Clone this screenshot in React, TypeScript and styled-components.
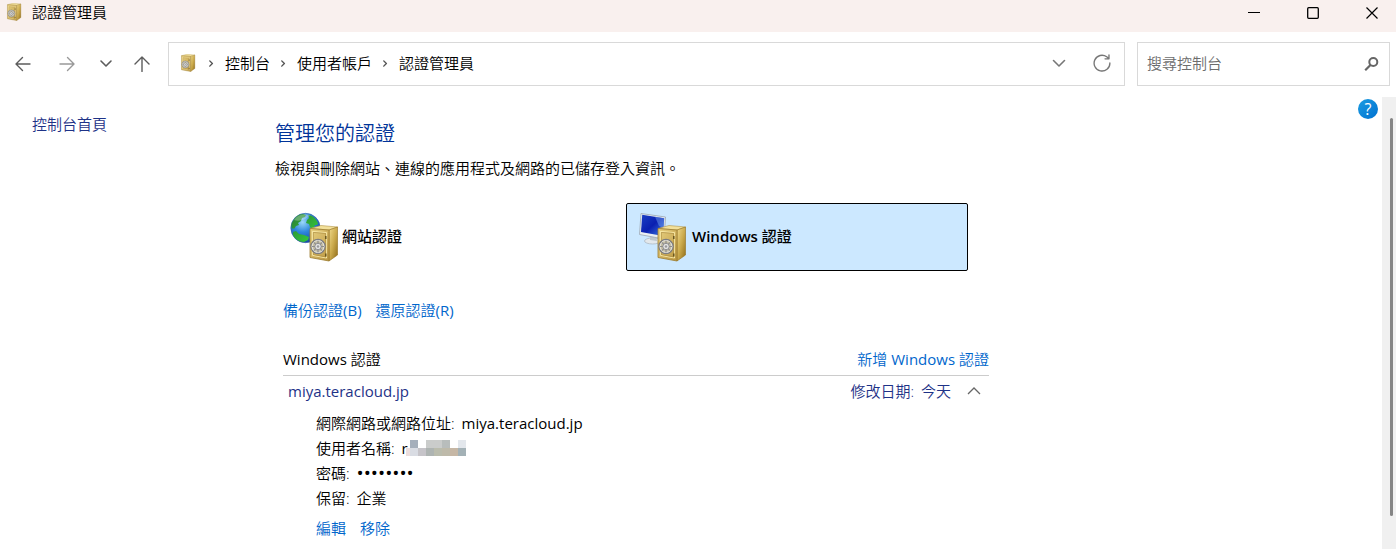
import React, { useId } from "react";
import styled, { createGlobalStyle } from "styled-components";

const GlobalStyle = createGlobalStyle`
  * { box-sizing: border-box; }
  body {
    margin: 0;
    background: #fff;
    color: #000;
    font-family: "Open Sans", "Noto Sans CJK TC", sans-serif;
    font-size: 15px;
    font-weight: 350;
    line-height: 20px;
  }
  h1, h2, p, dl, dd, ol { margin: 0; padding: 0; font-weight: inherit; }
  button, input { font: inherit; color: inherit; }
  svg { display: block; flex: none; }
`;

const Window = styled.div`
  min-height: 100vh;
  display: flex;
  flex-direction: column;
`;

/* Latin runs are set a little heavier than the Chinese text around them. */
const Latin = styled.span<{ $weight?: number }>`
  font-weight: ${(p) => p.$weight ?? 400};
`;

const TitleBar = styled.header`
  height: 32px;
  padding-left: 6px;
  display: flex;
  align-items: flex-start;
  background: #f9f0ee;
`;

const WindowTitle = styled.div`
  flex: 1;
  display: flex;
  align-items: center;
  gap: 8px;
  padding-top: 2px;
`;

const CaptionButton = styled.button`
  width: 59px;
  height: 26px;
  padding: 0;
  border: 0;
  background: none;
  display: grid;
  place-items: center;
`;

const CaptionButtons = styled.div`
  display: flex;
  margin-right: -5px;
`;

const Toolbar = styled.div`
  display: flex;
  align-items: center;
  gap: 12px;
  padding: 10px 6px 11px 8px;
`;

const NavButtons = styled.div`
  display: flex;
  align-items: center;
  gap: 14px;
  width: 148px;
`;

const IconButton = styled.button<{ $tone?: string; $width?: number }>`
  width: ${(p) => p.$width ?? 30}px;
  height: 30px;
  padding: 0;
  border: 0;
  background: none;
  color: ${(p) => p.$tone ?? "#5c5c5c"};
  display: grid;
  place-items: center;
`;

const AddressBar = styled.nav`
  flex: 1;
  height: 44px;
  border: 1px solid #d9d9d9;
  padding: 0 7px 2px 11px;
  display: flex;
  align-items: center;
`;

const Crumbs = styled.ol`
  flex: 1;
  display: flex;
  list-style: none;
`;

const Crumb = styled.li`
  display: flex;
  align-items: center;
  gap: 10px;
  padding-left: 10px;
  color: #555;

  a {
    color: #000;
    text-decoration: none;
  }
`;

const SearchBox = styled.label`
  width: 253px;
  height: 44px;
  border: 1px solid #d9d9d9;
  padding: 0 10px 2px 9px;
  display: flex;
  align-items: center;
  color: #666;

  input {
    flex: 1;
    min-width: 0;
    border: 0;
    padding: 0;
    outline: 0;
    background: none;
  }
  input::placeholder { color: #6d6d6d; opacity: 1; }
`;

const Body = styled.div`
  flex: 1;
  display: flex;
`;

const Sidebar = styled.aside`
  width: 275px;
  padding: 17px 0 0 32px;
`;

const Main = styled.main`
  flex: 1;
  padding: 23px 0 8px;
`;

const Content = styled.div`
  max-width: 714px;
`;

const Link = styled.a<{ $tone?: string }>`
  color: ${(p) => p.$tone ?? "#0066cc"};
  text-decoration: none;
`;

const Heading = styled.h1`
  font-size: 20px;
  line-height: 28px;
  color: #003399;
`;

const Description = styled.p`
  margin-top: 10px;
`;

const Vaults = styled.div`
  display: grid;
  grid-template-columns: 1fr 1fr;
  gap: 8px;
  margin: 25px 21px 0 1px;
`;

const VaultButton = styled.button<{ $selected?: boolean }>`
  height: 68px;
  padding: 0 12px 2px;
  border: 1px solid ${(p) => (p.$selected ? "#000" : "transparent")};
  border-radius: 2px;
  background: ${(p) => (p.$selected ? "#cce8ff" : "transparent")};
  display: flex;
  align-items: center;
  gap: 3px;
  font-weight: 500;
`;

const LinkRow = styled.div<{ $top: number }>`
  display: flex;
  gap: 14px;
  margin-top: ${(p) => p.$top}px;
`;

const Section = styled.section`
  padding-left: 8px;
`;

const SectionHeader = styled.div`
  display: flex;
  justify-content: space-between;
  margin-top: 29px;
  padding-bottom: 6px;
  border-bottom: 1px solid #ccc;
`;

const SectionTitle = styled.h2`
  font-size: 15px;
`;

const EntryButton = styled.button`
  width: 100%;
  margin-top: 5px;
  padding: 0 8px 0 5px;
  border: 0;
  background: none;
  color: #1e3287;
  display: flex;
  align-items: center;
  justify-content: space-between;
  text-align: left;
`;

const EntryDate = styled.span`
  display: flex;
  align-items: center;
  gap: 7px;

  svg { margin-left: 9px; }
`;

const Details = styled.div`
  padding: 9px 0 0 33px;
`;

const Detail = styled.div`
  display: flex;
  align-items: center;
  gap: 7px;
  height: 25px;

  dd { display: flex; align-items: center; }
`;

const Bullets = styled(Latin)`
  font-size: 19px;
`;

const HelpColumn = styled.div`
  padding: 2px 4px 0 0;
`;

const HelpButton = styled.button`
  width: 20px;
  height: 20px;
  padding: 0;
  border: 0;
  border-radius: 50%;
  background: linear-gradient(135deg, #1b9de2, #0070d0);
  color: #fff;
  font-size: 16px;
  font-weight: 500;
  display: grid;
  place-items: center;
`;

const ScrollTrack = styled.div`
  width: 14px;
  padding: 21px 3px 33px 8px;
  background: #f0f0f0;
  display: flex;
`;

const ScrollThumb = styled.div`
  flex: 1;
  border-radius: 2px;
  background: #858585;
`;

function SafeShape({ id }: { id: string }) {
  return (
    <>
      <defs>
        <linearGradient id={`${id}f`} x1="0" y1="0" x2="1" y2="1">
          <stop offset="0" stopColor="#e6cf80" />
          <stop offset=".5" stopColor="#d3b562" />
          <stop offset="1" stopColor="#b8943e" />
        </linearGradient>
        <linearGradient id={`${id}s`} x1="0" y1="0" x2="1" y2="1">
          <stop offset="0" stopColor="#f0da8c" />
          <stop offset=".5" stopColor="#cbaa4c" />
          <stop offset="1" stopColor="#8d6a17" />
        </linearGradient>
      </defs>
      <path d="M1 3.500 L12 .5 L28.500 2 L20 5 Z" fill="#f2e09a" stroke="#b39548" strokeWidth=".6" />
      <path d="M20 5 L28.500 2 L28.500 30 L20 36 Z" fill={`url(#${id}s)`} stroke="#94711f" strokeWidth=".6" />
      <path d="M1 3.500 L20 5 L20 36 L1 32.500 Z" fill={`url(#${id}f)`} stroke="#9c7c30" strokeWidth=".8" />
      <path d="M3.500 6.500 L17.500 7.600 L17.500 33 L3.500 30.300 Z" fill="none" stroke="#fff0b0" strokeWidth=".9" />
      <path d="M4.300 7.400 L16.700 8.400 L16.700 32 L4.300 29.600 Z" fill="none" stroke="#a5843a" strokeWidth=".6" />
      <path d="M16.800 11v3M16.800 28.500v3" stroke="#63501c" strokeWidth="1.400" />
      <circle cx="9" cy="21.500" r="7" fill="#c4bda4" stroke="#7d7d80" strokeWidth="1.500" />
      <circle cx="9" cy="21.500" r="6" fill="none" stroke="#f2f2ee" strokeWidth=".9" />
      <path d="M9 15.500v12M3 21.500h12M4.800 17.300l8.400 8.400M13.200 17.300l-8.400 8.400" stroke="#8c8c8c" strokeWidth="1.100" />
      <circle cx="9" cy="21.500" r="3.200" fill="#e2e2e2" stroke="#808084" strokeWidth=".8" />
      <circle cx="9" cy="21.500" r="1.200" fill="#9a9a9c" />
    </>
  );
}

function SafeIcon() {
  const id = useId();
  return (
    <svg width="18" height="18" viewBox="-2 0 37 37" aria-hidden="true">
      <SafeShape id={id} />
    </svg>
  );
}

function WebVaultIcon() {
  const id = useId();
  return (
    <svg width="50" height="52" viewBox="-1 -1 50 52" aria-hidden="true">
      <defs>
        <radialGradient id={`${id}g`} cx=".4" cy=".3" r=".75">
          <stop offset="0" stopColor="#9bd8f8" />
          <stop offset=".45" stopColor="#2f88dc" />
          <stop offset="1" stopColor="#1240a0" />
        </radialGradient>
        <linearGradient id={`${id}l`} x1="0" y1="0" x2="1" y2="1">
          <stop offset="0" stopColor="#2a7b36" />
          <stop offset="1" stopColor="#35d93c" />
        </linearGradient>
      </defs>
      <g transform="translate(0 1)">
        <circle cx="15.500" cy="16" r="14.700" fill={`url(#${id}g)`} stroke="#3565a2" strokeWidth=".6" />
        <path
          d="M3 9C6 4 9 2.500 13 2l3 1-1 2-3 1-1 3-3 2 1 2-3 1-2 3-1-1-1 1C1 14 1 12 3 9Z M18 3c5 0 8 4 10 8l-1 2-2 0-2 5-3-3-1-3-3-1 1-3 2-2Z M3 20l3-1 3 3 5 1 5 2-1 3-4 2C9 30 5 27 3 23Z"
          fill={`url(#${id}l)`}
        />
        <path d="M4 8C7 3 13 1 20 3C17 7 10 10 4 8Z" fill="#fff" opacity=".28" />
      </g>
      <g transform="translate(19 14)">
        <SafeShape id={id} />
      </g>
    </svg>
  );
}

function WindowsVaultIcon() {
  const id = useId();
  return (
    <svg width="50" height="52" viewBox="0 -1 50 52" aria-hidden="true">
      <defs>
        <linearGradient id={`${id}m`} x1="0" y1="0" x2="1" y2="1">
          <stop offset="0" stopColor="#1b3fc4" />
          <stop offset=".5" stopColor="#0a1fb0" />
          <stop offset="1" stopColor="#3f7ee6" />
        </linearGradient>
      </defs>
      <g transform="translate(0 2)">
        <ellipse cx="13.500" cy="28" rx="8" ry="3" fill="#e3e8ec" stroke="#a9b3bb" strokeWidth=".7" />
        <path d="M11 21l6 1 1 6-7-1Z" fill="#bcc5cc" />
        <path d="M2 .5L26.500 4L25 26L.5 21.500Z" fill="#e9eef2" stroke="#9aa6b2" strokeWidth=".8" />
        <path d="M3.200 1.800L25.200 5.200L24 23L2 19Z" fill={`url(#${id}m)`} />
        <path d="M16 3.800L25.200 5.200L24.500 15L20 13Z" fill="#77a8f5" opacity=".45" />
      </g>
      <g transform="translate(18 14)">
        <SafeShape id={id} />
      </g>
    </svg>
  );
}

type GlyphProps = { d: string; size?: number; weight?: number };

function Glyph({ d, size = 16, weight = 1.4 }: GlyphProps) {
  return (
    <svg
      width={size}
      height={size}
      viewBox="0 0 16 16"
      fill="none"
      stroke="currentColor"
      strokeWidth={weight}
      strokeLinecap="round"
      strokeLinejoin="round"
      aria-hidden="true"
    >
      <path d={d} />
    </svg>
  );
}

const crumbs = ["控制台", "使用者帳戶", "認證管理員"];

/* Two rows of 8px blocks covering the account name. */
const maskRows = [
  ["", "#a5afbb", "", "#cacccb", "#cacccb", "#b8bdbc", "", "#e3e7ec"],
  ["#ecdedd", "#d9dce3", "#c6c4c9", "#aeb4b2", "#babcad", "#bebaaa", "#c6b7a5", "#a3b1b6"],
];

const Mask = styled.svg`
  margin-left: -2px;
`;

function MaskedName() {
  return (
    <Mask width="60" height="16" aria-label="已遮蔽">
      {maskRows.map((row, y) =>
        row.map((fill, x) =>
          fill ? (
            <rect key={`${x}-${y}`} x={x * 8 - 4} y={y * 8} width="8" height="8" fill={fill} shapeRendering="crispEdges" />
          ) : null
        )
      )}
    </Mask>
  );
}

export default function App() {
  return (
    <Window>
      <GlobalStyle />
      <TitleBar>
        <WindowTitle>
          <SafeIcon />
          認證管理員
        </WindowTitle>
        <CaptionButtons>
          <CaptionButton aria-label="最小化">
            <svg width="12" height="12" stroke="#000" aria-hidden="true"><path d="M0 5.500h12" /></svg>
          </CaptionButton>
          <CaptionButton aria-label="最大化">
            <svg width="12" height="12" fill="none" stroke="#000" strokeWidth="1.300" aria-hidden="true">
              <rect x=".7" y=".7" width="10.600" height="10.600" rx="1" />
            </svg>
          </CaptionButton>
          <CaptionButton aria-label="關閉">
            <svg width="12" height="12" stroke="#000" strokeWidth="1.200" aria-hidden="true"><path d="M.5 .5l11 11M11.500 .5l-11 11" /></svg>
          </CaptionButton>
        </CaptionButtons>
      </TitleBar>

      <Toolbar>
        <NavButtons>
          <IconButton aria-label="上一頁"><Glyph d="M15 8H1.500M7.500 1.500L1 8l6.500 6.500" /></IconButton>
          <IconButton aria-label="下一頁" $tone="#999"><Glyph d="M1 8h13.500M8.500 1.500L15 8l-6.500 6.500" /></IconButton>
          <IconButton aria-label="最近的位置" $width={20}><Glyph weight={1.6} d="M3 5l5 5 5-5" /></IconButton>
          <IconButton aria-label="上一層" $width={24}><Glyph d="M8 15.500V1M1 8l7-7 7 7" /></IconButton>
        </NavButtons>
        <AddressBar aria-label="位址">
          <SafeIcon />
          <Crumbs>
            {crumbs.map((name) => (
              <Crumb key={name}>
                <Glyph size={7} weight={3.2} d="M4 2l6 6-6 6" />
                <a href="#">{name}</a>
              </Crumb>
            ))}
          </Crumbs>
          <IconButton aria-label="先前的位置" $tone="#777" $width={56}><Glyph weight={1.6} d="M2.500 5.500l5.500 5.500 5.500-5.500" /></IconButton>
          <IconButton aria-label="重新整理" $tone="#777">
            <Glyph size={18} weight={1.2} d="M15 8A7 7 0 1 1 12.200 2.500L14 4M14.200 .8V4.300H10.700" />
          </IconButton>
        </AddressBar>
        <SearchBox>
          <input type="text" placeholder="搜尋控制台" aria-label="搜尋控制台" />
          <svg width="15" height="15" viewBox="0 0 15 15" fill="none" stroke="currentColor" aria-hidden="true">
            <circle cx="9.300" cy="6" r="4" strokeWidth="2" />
            <path d="M6.500 9L1.200 14.200" strokeWidth="2.200" />
          </svg>
        </SearchBox>
      </Toolbar>

      <Body>
        <Sidebar>
          <Link href="#" $tone="#1e3287">控制台首頁</Link>
        </Sidebar>
        <Main>
          <Content>
            <Heading>管理您的認證</Heading>
            <Description>檢視與刪除網站、連線的應用程式及網路的已儲存登入資訊。</Description>
            <Vaults>
              <VaultButton><WebVaultIcon />網站認證</VaultButton>
              <VaultButton $selected aria-pressed="true">
                <WindowsVaultIcon />
                <span><Latin $weight={600}>Windows</Latin> 認證</span>
              </VaultButton>
            </Vaults>
            <Section>
              <LinkRow $top={29}>
                <Link href="#">備份認證<Latin>(B)</Latin></Link>
                <Link href="#">還原認證<Latin>(R)</Latin></Link>
              </LinkRow>
              <SectionHeader>
                <SectionTitle><Latin>Windows </Latin>認證</SectionTitle>
                <Link href="#">新增<Latin> Windows </Latin>認證</Link>
              </SectionHeader>
              <EntryButton aria-expanded="true">
                <Latin>miya.teracloud.jp</Latin>
                <EntryDate>
                  <span>修改日期:</span>
                  <span>今天</span>
                  <svg width="14" height="8" fill="none" stroke="#666" strokeWidth="1.300" aria-hidden="true"><path d="M1 7l6-6 6 6" /></svg>
                </EntryDate>
              </EntryButton>
              <Details>
                <dl>
                  <Detail><dt>網際網路或網路位址:</dt><dd><Latin>miya.teracloud.jp</Latin></dd></Detail>
                  <Detail><dt>使用者名稱:</dt><dd><Latin>r</Latin><MaskedName /></dd></Detail>
                  <Detail><dt>密碼:</dt><dd><Bullets $weight={500}>••••••••</Bullets></dd></Detail>
                  <Detail><dt>保留:</dt><dd>企業</dd></Detail>
                </dl>
                <LinkRow $top={8}>
                  <Link href="#">編輯</Link>
                  <Link href="#">移除</Link>
                </LinkRow>
              </Details>
            </Section>
          </Content>
        </Main>
        <HelpColumn><HelpButton aria-label="說明">?</HelpButton></HelpColumn>
        <ScrollTrack><ScrollThumb /></ScrollTrack>
      </Body>
    </Window>
  );
}
